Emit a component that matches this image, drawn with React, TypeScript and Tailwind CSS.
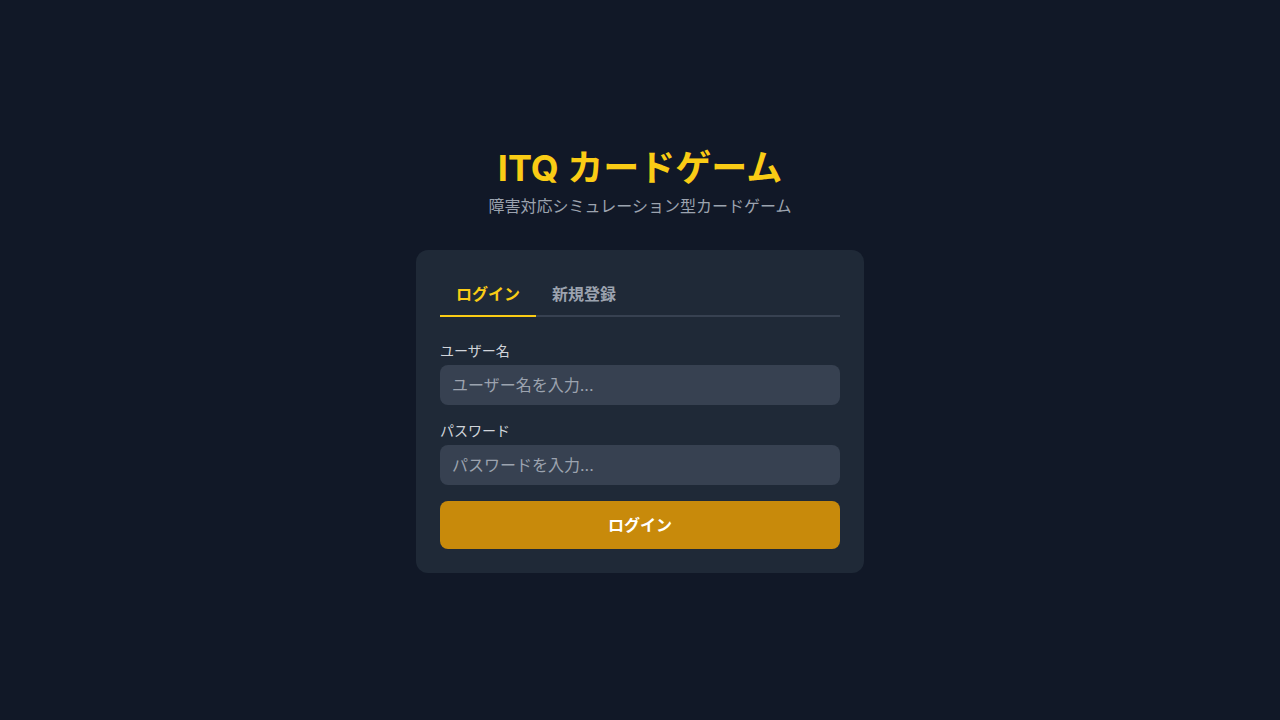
import React, { useState } from 'react'

const App: React.FC = () => {
  const [tab, setTab] = useState<'login' | 'register'>('login')
  const [username, setUsername] = useState('')
  const [password, setPassword] = useState('')

  return (
    <div
      className="min-h-screen bg-[#111827] flex items-center justify-center"
      style={{ fontFamily: 'Inter, "Noto Sans CJK JP", sans-serif' }}
    >
      <div className="w-[448px]">
        {/* Header */}
        <div className="text-center mb-8">
          <h1 className="text-4xl font-bold text-[#facc15] mb-1.5">ITQ カードゲーム</h1>
          <p className="text-base text-[#9ca3af]">障害対応シミュレーション型カードゲーム</p>
        </div>

        {/* Card */}
        <div className="bg-[#1f2937] rounded-xl p-6">
          {/* Tabs */}
          <div className="flex border-b-2 border-[#374151] mb-6">
            <button
              onClick={() => setTab('login')}
              className={`px-4 pt-2 pb-[9px] text-base font-semibold border-b-2 -mb-[2px] ${
                tab === 'login' ? 'text-[#facc15] border-[#facc15]' : 'text-[#9ca3af] border-transparent'
              }`}
            >
              ログイン
            </button>
            <button
              onClick={() => setTab('register')}
              className={`px-4 pt-2 pb-[9px] text-base font-semibold border-b-2 -mb-[2px] ${
                tab === 'register' ? 'text-[#facc15] border-[#facc15]' : 'text-[#9ca3af] border-transparent'
              }`}
            >
              新規登録
            </button>
          </div>

          {/* Form */}
          <form className="space-y-4" onSubmit={e => e.preventDefault()}>
            <div>
              <label className="block text-sm text-[#d1d5db] mb-1">ユーザー名</label>
              <input
                value={username}
                onChange={e => setUsername(e.target.value)}
                placeholder="ユーザー名を入力..."
                className="w-full bg-[#374151] text-white placeholder-[#9ca3af] rounded-lg px-3 py-2 text-base outline-none"
              />
            </div>
            <div>
              <label className="block text-sm text-[#d1d5db] mb-1">パスワード</label>
              <input
                type="password"
                value={password}
                onChange={e => setPassword(e.target.value)}
                placeholder="パスワードを入力..."
                className="w-full bg-[#374151] text-white placeholder-[#9ca3af] rounded-lg px-3 py-2 text-base outline-none"
              />
            </div>
            <button
              type="submit"
              className="w-full bg-[#c88a0b] text-white font-bold text-base py-3 rounded-lg"
            >
              {tab === 'login' ? 'ログイン' : '新規登録'}
            </button>
          </form>
        </div>
      </div>
    </div>
  )
}

export default App
